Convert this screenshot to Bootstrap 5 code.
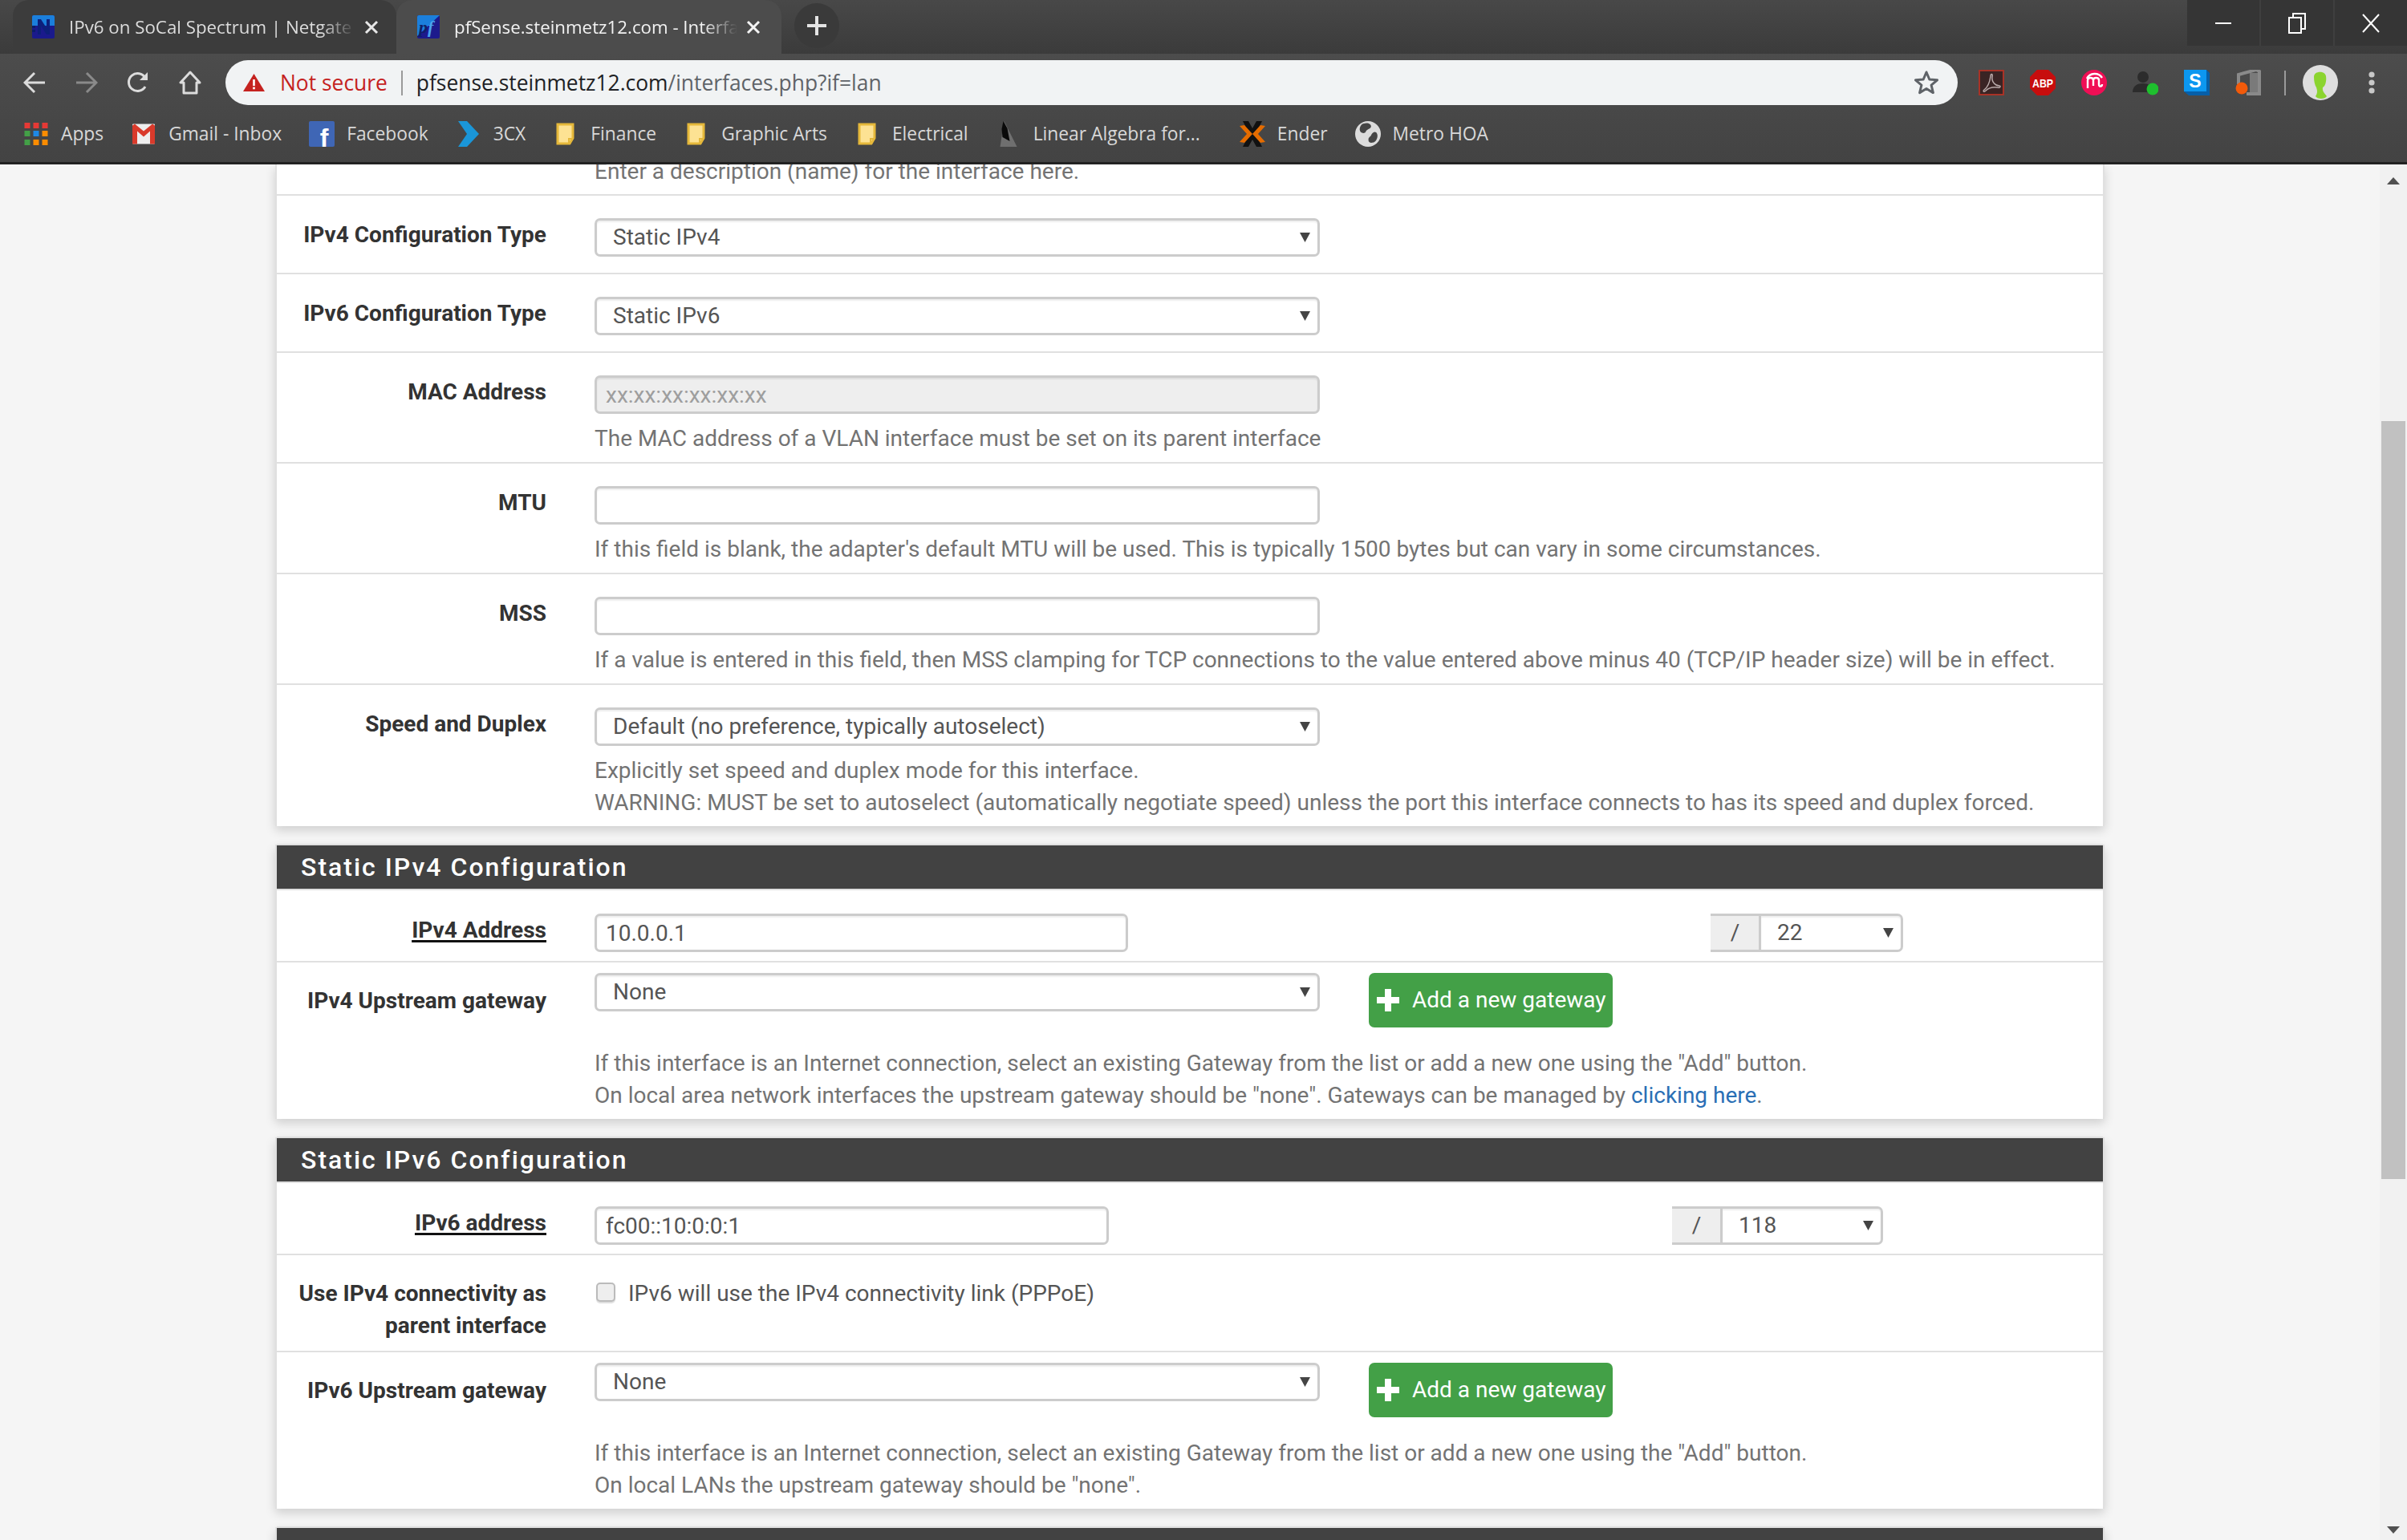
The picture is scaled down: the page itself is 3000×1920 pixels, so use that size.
<!DOCTYPE html>
<html lang="en"><head><meta charset="utf-8"><title>pfSense.steinmetz12.com - Interfaces</title>
<link href="https://cdn.jsdelivr.net/npm/bootstrap@5.3.0/dist/css/bootstrap.min.css" rel="stylesheet">
<style>
html,body{margin:0;height:1920px;width:3000px;overflow:hidden;background:#f5f5f5}
body{font-family:Roboto,"Liberation Sans",sans-serif;font-size:28px;line-height:40px;color:#212121}
.chrome-ui{font-family:"Open Sans","Noto Sans",sans-serif}
.strip{height:67px;background:linear-gradient(#484848,#3b3b3b);padding-left:16px}
.browser-tab{width:478px;height:67px;border-radius:20px 20px 0 0;padding-left:24px;color:#dcdcdc;font-size:22.3px;background:#3c3c3c}
.browser-tab.on{background:#4c4c4c;color:#f2f2f2;padding-left:26px;width:480px;margin-left:0}
.tab-title{margin-left:18px;width:357px;white-space:nowrap;overflow:hidden;-webkit-mask-image:linear-gradient(90deg,#000 88%,transparent);mask-image:linear-gradient(90deg,#000 88%,transparent);line-height:67px;padding-bottom:1px}
.tab-x{margin-left:11px;width:18px;height:18px}
.on .tab-title{width:353px}
.new-tab{width:56px;height:56px;border-radius:50%;background:#3a3a3a;margin-left:16px;margin-top:4px}
.win-btns{margin-left:auto;height:57px;background:#353535;width:274px}
.win-btn{flex:1;border-left:2px solid #3f3f3f}
.win-btn:first-child{border-left:0}
.tools{height:64px;background:linear-gradient(#4c4c4c,#484848);padding:8px 0 0 11px}
.navb{width:64.5px;height:56px}
.omni{width:2159px;margin-left:12px;height:56px;background:#f1f3f4;border-radius:28px;padding-left:22px;font-size:26.4px;color:#5f6368}
.notsec{color:#c5221f;margin-left:19px}
.omni-sep{width:2px;height:31px;background:#9a9a9a;margin:0 17px}
.dom{color:#202124}
.exts{margin-left:26px;gap:32px}
.ext{width:32px;height:32px;display:block}
.ext-sep{margin:0 0 0 -3px}
.ext-av{margin-left:-11px}
.ext-dots{margin-left:5px}
.marks{height:74px;background:linear-gradient(#484848,#434343);border-bottom:3px solid #222;padding:0 0 0 29px;font-size:22.8px;color:#d8d8d8;gap:34px}
.mark-item{gap:15px;white-space:nowrap}
.mark-ico{width:32px;height:32px;flex:none}
.mark-last{margin-right:15px}
.page-wrap{height:1715px}
.sheet{width:2966px;height:1715px;overflow:hidden}
.bar{width:34px;height:1715px;background:#f1f1f1}
.thumb{width:30px;height:945px;background:#c1c1c1;margin:320px 0 0 2px}
.sect{margin:0 343px 23px;border:0;border-left:2px solid #e0e0e0;border-right:2px solid #e0e0e0;border-radius:0;box-shadow:0 5px 12px rgba(0,0,0,.16);background:#fff}
.sect-head{background:#424242;color:#fff;font-size:32px;font-weight:500;letter-spacing:2px;line-height:54px;padding:0 0 0 30px;border-radius:0!important;border:0;border-top:2px solid #e0e0e0;border-bottom:2px solid #e0e0e0;margin:-1px 0 0;box-sizing:content-box;height:54px}
.fld{display:flex;gap:60px;border-top:2px solid #e0e0e0;padding:28px 0 20px}
.fld:first-child,.sect-head+.fld{border-top:0}
.fld-lab{width:336px;text-align:right;font-weight:700;color:#333;flex:none;padding-top:1px}
.fld-main{flex:1;min-width:0}
.ctl-wide{width:904px}
.form-control.pf,.form-select.pf{height:48px;border:3px solid #ccc;border-radius:7px;font-size:28px;color:#555;line-height:40px;box-shadow:inset 0 2px 2px rgba(0,0,0,.07);padding:0 11px;background-color:#fff}
.form-select.pf{padding-left:20px;background-size:13px 12px;background-position:right 9px center;background-image:url("data:image/svg+xml,%3Csvg xmlns='http://www.w3.org/2000/svg' viewBox='0 0 13 12'%3E%3Cpath d='M0 0h13L6.500 12z' fill='%23444'/%3E%3C/svg%3E")}
.form-control.pf:disabled{background:#eee}
.form-control.pf::placeholder{color:#9e9e9e}
.hint{color:#737373;margin-top:11px;white-space:nowrap;margin-bottom:-11px}
.hint.gw{margin-top:25px}
.hint a{color:#2a6fb5;text-decoration:none}
.lab-abbr{color:#333;text-decoration:underline;text-decoration-thickness:3px;text-underline-offset:3px;text-decoration-color:#111}
.fld.tight{padding:29px 0 11px}
.fld.gate{padding:13px 0 20px}
.fld.gate .fld-lab{padding-top:15px}
.fld.tick{padding:27px 0 11px}
.fld-top{border-top:0;padding:0 0 8px;height:37px;align-items:flex-end}
.w-v4{width:665px}
.w-v6{width:641px}
.grp-v4{width:240px;margin-left:726px}
.grp-v6{width:263px;margin-left:702px}
.input-group .input-group-text.pf-add{background:#eee;border:3px solid #ccc;border-left:0;border-right:0;height:48px;border-radius:0;width:61px;justify-content:center;font-size:28px;color:#555;padding:0}
.input-group .form-select.pf{border-top-left-radius:0;border-bottom-left-radius:0;margin-left:0;flex:1;width:auto}
.btn.add-gw{background:#43a047;border:0;color:#fff;width:304px;height:68px;border-radius:7px;font-size:28px;padding:0 0 0 10px;gap:16px;justify-content:flex-start;margin-left:61px;white-space:nowrap}
.pick{width:24px;height:24px;background:#eee;border:2px solid #bbb;border-radius:5px;margin:7px 16px 0 2px;flex:none;box-shadow:0 2px 1px #ddd}
.tick-text{color:#555;padding-top:1px}
</style></head>
<body>
<div class="chrome-ui">
 <div class="strip d-flex position-relative">
  <div class="browser-tab d-flex align-items-center">
   <svg width="28" height="29" viewBox="0 0 28 29"><rect width="28" height="29" rx="2" fill="#1a1a8c"/><path d="M2 0h24a2 2 0 0 1 2 2v11H0V2a2 2 0 0 1 2-2z" fill="#1b7fdc"/><path d="M0 13h4v3H0zM0 18h4v3H0z" fill="#0b1d6b"/><path d="M7 24V5h4l7 11V5h4v19h-4L11 13v11z" fill="#0d1f7a"/></svg>
   <span class="tab-title">IPv6 on SoCal Spectrum | Netgate</span>
   <svg class="tab-x" viewBox="0 0 18 18"><path d="M2 2l14 14M16 2L2 16" stroke="#e8e8e8" stroke-width="3"/></svg>
  </div>
  <div class="browser-tab on d-flex align-items-center">
   <svg width="28" height="29" viewBox="0 0 28 29"><rect width="28" height="29" rx="2" fill="#1d1a8c"/><path d="M2 0h26L0 26V2a2 2 0 0 1 2-2z" fill="#1b7fdc"/><text x="2" y="22" font-family="Liberation Serif,serif" font-style="italic" font-weight="700" font-size="22" fill="#0f1f66">p<tspan fill="#4aa3ee">f</tspan></text></svg>
   <span class="tab-title">pfSense.steinmetz12.com - Interfa</span>
   <svg class="tab-x" viewBox="0 0 18 18"><path d="M2 2l14 14M16 2L2 16" stroke="#f4f4f4" stroke-width="3"/></svg>
  </div>
  <div class="new-tab d-flex align-items-center justify-content-center">
   <svg width="24" height="24" viewBox="0 0 24 24"><path d="M12 0v24M0 12h24" stroke="#e4e4e4" stroke-width="4"/></svg>
  </div>
  <div class="win-btns d-flex">
   <div class="win-btn d-flex align-items-center justify-content-center"><svg width="20" height="20" viewBox="0 0 20 20"><path d="M0 10h20" stroke="#fff" stroke-width="2"/></svg></div>
   <div class="win-btn d-flex align-items-center justify-content-center"><svg width="22" height="26" viewBox="0 0 22 26"><path d="M6 5V1h15v19h-4M1 6h15v19H1z" fill="none" stroke="#fff" stroke-width="2"/></svg></div>
   <div class="win-btn d-flex align-items-center justify-content-center"><svg width="22" height="24" viewBox="0 0 22 24"><path d="M1 1l20 22M21 1L1 23" stroke="#fff" stroke-width="2"/></svg></div>
  </div>
 </div>
 <div class="tools d-flex">
  <div class="navb d-flex align-items-center justify-content-center"><svg width="28" height="30" viewBox="0 0 28 30"><path d="M27 15H3M14 3L2 15l12 12" fill="none" stroke="#dcdcdc" stroke-width="3"/></svg></div>
  <div class="navb d-flex align-items-center justify-content-center"><svg width="28" height="30" viewBox="0 0 28 30"><path d="M1 15h24M14 3l12 12-12 12" fill="none" stroke="#8a8a8a" stroke-width="3"/></svg></div>
  <div class="navb d-flex align-items-center justify-content-center"><svg width="28" height="30" viewBox="0 0 28 30"><path d="M23 20a11 11 0 1 1 0-11" fill="none" stroke="#dcdcdc" stroke-width="3"/><path d="M26 2v10H16z" fill="#dcdcdc"/></svg></div>
  <div class="navb d-flex align-items-center justify-content-center"><svg width="28" height="30" viewBox="0 0 28 30"><path d="M14 2L2 15h4v13h16V15h4z" fill="none" stroke="#dcdcdc" stroke-width="3" stroke-linejoin="round"/></svg></div>
  <div class="omni d-flex align-items-center">
   <svg width="27" height="22" viewBox="0 0 27 22"><path d="M13.500 0L27 22H0z" fill="#c5221f"/><path d="M12.200 7h2.600v8h-2.600zM12.200 16.500h2.600v2.700h-2.600z" fill="#fff"/></svg>
   <span class="notsec">Not secure</span><span class="omni-sep"></span>
   <span class="dom">pfsense.steinmetz12.com</span><span>/interfaces.php?if=lan</span>
   <svg class="ms-auto me-4" width="30" height="30" viewBox="0 0 30 30"><path d="M15 2l3.800 9 9.700.8-7.400 6.300 2.300 9.500L15 22.500l-8.400 5.100 2.300-9.500-7.400-6.300 9.700-.8z" fill="none" stroke="#5f6368" stroke-width="3" stroke-linejoin="round"/></svg>
  </div>
  <div class="exts d-flex align-items-center">
   <svg class="ext" viewBox="0 0 32 32"><rect x="1" y="1" width="30" height="30" fill="#3a2424" stroke="#a93226" stroke-width="2"/><path d="M7 25c4-3 7-10 8-17 0-4 3-3 2 1-1 6 4 11 9 11 2 0 1 3-2 2-6-1-11 0-15 4-2 2-4 1-2-1z" fill="none" stroke="#b9a9a9" stroke-width="1.500"/></svg>
   <svg class="ext" viewBox="0 0 32 32"><path d="M9 0h14l9 9v14l-9 9H9l-9-9V9z" fill="#c70d0d"/><text x="16" y="22" text-anchor="middle" font-family="Liberation Sans,sans-serif" font-weight="700" font-size="15" fill="#fff" textLength="26" lengthAdjust="spacingAndGlyphs">ABP</text></svg>
   <svg class="ext" viewBox="0 0 32 32"><circle cx="16" cy="16" r="16" fill="#f00e55"/><path d="M8 23V13c0-4 7-4 7 0v7M15 13c0-4 7-4 7 0v5c0 4 4 3 4 0" fill="none" stroke="#fff" stroke-width="2.400"/><path d="M7 11a11 11 0 0 1 19-1" fill="none" stroke="#fff" stroke-width="2.400"/></svg>
   <svg class="ext" viewBox="0 0 32 32"><circle cx="13" cy="9" r="7" fill="#2c2c2c"/><path d="M0 28c0-8 6-11 13-11s11 3 11 11z" fill="#2c2c2c"/><circle cx="25" cy="24" r="7.500" fill="#1ec02e"/></svg>
   <svg class="ext" viewBox="0 0 32 32"><path d="M28 0l4 4v28H6l-6-5z" fill="#075fa8"/><rect width="28" height="27" fill="#0c97f0"/><text x="14" y="22" text-anchor="middle" font-family="Liberation Sans,sans-serif" font-weight="700" font-size="23" fill="#fff">S</text></svg>
   <svg class="ext" viewBox="0 0 32 32"><path d="M4 18V6L26 0l4 2v28H14" fill="none" stroke="#8a8a8a" stroke-width="4"/><rect x="18" y="4" width="10" height="24" fill="#7a7a7a"/><circle cx="8" cy="23" r="7.500" fill="#f25a0a"/></svg>
   <span class="omni-sep ext-sep"></span>
   <svg class="ext-av" width="44" height="44" viewBox="0 0 44 44"><circle cx="22" cy="22" r="22" fill="#dedede"/><path d="M14 15c0-8 14-8 15-1 1 6-1 13-4 14-1 5 3 8 5 11-2 4-12 4-14 0 3-4 2-8 1-11-2-3-3-8-3-13z" fill="#8bd42f"/></svg>
   <svg class="ext-dots" width="10" height="30" viewBox="0 0 10 30"><circle cx="5" cy="5" r="3.600" fill="#c8c8c8"/><circle cx="5" cy="15" r="3.600" fill="#c8c8c8"/><circle cx="5" cy="25" r="3.600" fill="#c8c8c8"/></svg>
  </div>
 </div>
 <div class="marks d-flex align-items-center">
  <div class="mark-item d-flex align-items-center"><svg class="mark-ico" viewBox="-1.500 -2 32 32"><path d="M0 0h7v7H0zM11 0h7v7h-7zM22 0h7v7h-7z" fill="#e53935"/><path d="M0 10h7v7H0z" fill="#43a047"/><path d="M11 10h7v7h-7z" fill="#1e88e5"/><path d="M22 10h7v7h-7z" fill="#fb8c00"/><path d="M0 21h7v7H0z" fill="#43a047"/><path d="M11 21h7v7h-7zM22 21h7v7h-7z" fill="#fb8c00"/></svg>Apps</div>
  <div class="mark-item d-flex align-items-center"><svg class="mark-ico" viewBox="-2 -2.500 32 32"><rect y="1" width="28" height="25" rx="1" fill="#eee"/><path d="M0 3v23h6V10l8 7 8-7v16h6V3l-3-2-11 9L3 1z" fill="#d93a2b"/></svg>Gmail - Inbox</div>
  <div class="mark-item d-flex align-items-center"><svg class="mark-ico" viewBox="0 0 32 32"><rect width="32" height="32" rx="2" fill="#3f66b5"/><text x="19" y="32" text-anchor="middle" font-family="Liberation Sans,sans-serif" font-weight="700" font-size="32" fill="#fff">f</text></svg>Facebook</div>
  <div class="mark-item d-flex align-items-center"><svg class="mark-ico" viewBox="-3 0 32 32"><path d="M0 0h11l15 16-15 16H0l11-16z" fill="#1a96d8"/></svg>3CX</div>
  <div class="mark-item d-flex align-items-center"><svg class="mark-ico" viewBox="-4 -2 32 32"><path d="M2 2h19v17l-4 7H2z" fill="#fde293" stroke="#e5b83a" stroke-width="3"/><path d="M16 26v-6h6" fill="none" stroke="#e5b83a" stroke-width="2"/></svg>Finance</div>
  <div class="mark-item d-flex align-items-center"><svg class="mark-ico" viewBox="-4 -2 32 32"><path d="M2 2h19v17l-4 7H2z" fill="#fde293" stroke="#e5b83a" stroke-width="3"/><path d="M16 26v-6h6" fill="none" stroke="#e5b83a" stroke-width="2"/></svg>Graphic Arts</div>
  <div class="mark-item d-flex align-items-center"><svg class="mark-ico" viewBox="-4 -2 32 32"><path d="M2 2h19v17l-4 7H2z" fill="#fde293" stroke="#e5b83a" stroke-width="3"/><path d="M16 26v-6h6" fill="none" stroke="#e5b83a" stroke-width="2"/></svg>Electrical</div>
  <div class="mark-item mark-last d-flex align-items-center"><svg class="mark-ico" viewBox="-2.500 0 32 32"><path d="M8 0l4 8 12 24H3z" fill="#8c8c8c" opacity=".6"/><path d="M7 0l5 9 3 16-9-5-1-10z" fill="#0a0a0a"/></svg>Linear Algebra for...</div>
  <div class="mark-item d-flex align-items-center"><svg class="mark-ico" viewBox="0 0 32 32"><path d="M4 0h7l5 9 5-9h7l-8 16 8 16h-7l-5-9-5 9H4l8-16z" fill="#111"/><path d="M0 6l6-1 10 11L6 27l-6-1 9-10zM32 6l-6-1-10 11 10 11 6-1-9-10z" fill="#e56c00"/></svg>Ender</div>
  <div class="mark-item d-flex align-items-center"><svg class="mark-ico" viewBox="0 0 29 29"><circle cx="14.500" cy="14.500" r="14.500" fill="#dcdcdc"/><path d="M9 3c5-2 9 0 9 3 0 3-5 3-6 6-1 2-4 2-6 0-2-3 0-8 3-9zM24 13c3 4 0 10-3 11-4 1-6 0-6-3s2-3 3-5 3-5 6-3z" fill="#454545"/></svg>Metro HOA</div>
 </div>
</div>
<div class="page-wrap d-flex">
 <div class="sheet">
  <div class="card sect">
   <div class="fld fld-top"><div class="fld-lab"></div><div class="fld-main hint m-0">Enter a description (name) for the interface here.</div></div>
   <div class="fld"><div class="fld-lab">IPv4 Configuration Type</div><div class="fld-main"><select class="form-select pf ctl-wide"><option>Static IPv4</option></select></div></div>
   <div class="fld"><div class="fld-lab">IPv6 Configuration Type</div><div class="fld-main"><select class="form-select pf ctl-wide"><option>Static IPv6</option></select></div></div>
   <div class="fld"><div class="fld-lab">MAC Address</div><div class="fld-main"><input class="form-control pf ctl-wide" disabled placeholder="xx:xx:xx:xx:xx:xx"><div class="hint">The MAC address of a VLAN interface must be set on its parent interface</div></div></div>
   <div class="fld"><div class="fld-lab">MTU</div><div class="fld-main"><input class="form-control pf ctl-wide"><div class="hint">If this field is blank, the adapter's default MTU will be used. This is typically 1500 bytes but can vary in some circumstances.</div></div></div>
   <div class="fld"><div class="fld-lab">MSS</div><div class="fld-main"><input class="form-control pf ctl-wide"><div class="hint">If a value is entered in this field, then MSS clamping for TCP connections to the value entered above minus 40 (TCP/IP header size) will be in effect.</div></div></div>
   <div class="fld"><div class="fld-lab">Speed and Duplex</div><div class="fld-main"><select class="form-select pf ctl-wide"><option>Default (no preference, typically autoselect)</option></select><div class="hint">Explicitly set speed and duplex mode for this interface.<br>WARNING: MUST be set to autoselect (automatically negotiate speed) unless the port this interface connects to has its speed and duplex forced.</div></div></div>
  </div>
  <div class="card sect">
   <div class="card-header sect-head">Static IPv4 Configuration</div>
   <div class="fld tight"><div class="fld-lab"><span class="lab-abbr">IPv4 Address</span></div><div class="fld-main d-flex"><input class="form-control pf w-v4" value="10.0.0.1"><div class="input-group flex-nowrap grp-v4"><span class="input-group-text pf-add">/</span><select class="form-select pf"><option>22</option></select></div></div></div>
   <div class="fld gate"><div class="fld-lab">IPv4 Upstream gateway</div><div class="fld-main"><div class="d-flex align-items-start"><select class="form-select pf ctl-wide"><option>None</option></select><button class="btn add-gw d-flex align-items-center" type="button"><svg width="28" height="28" viewBox="0 0 28 28"><path d="M14 0v28M0 14h28" stroke="#fff" stroke-width="8"/></svg>Add a new gateway</button></div><div class="hint gw">If this interface is an Internet connection, select an existing Gateway from the list or add a new one using the "Add" button.<br>On local area network interfaces the upstream gateway should be "none". Gateways can be managed by <a href="#">clicking here</a>.</div></div></div>
  </div>
  <div class="card sect">
   <div class="card-header sect-head">Static IPv6 Configuration</div>
   <div class="fld tight"><div class="fld-lab"><span class="lab-abbr">IPv6 address</span></div><div class="fld-main d-flex"><input class="form-control pf w-v6" value="fc00::10:0:0:1"><div class="input-group flex-nowrap grp-v6"><span class="input-group-text pf-add">/</span><select class="form-select pf"><option>118</option></select></div></div></div>
   <div class="fld tick"><div class="fld-lab">Use IPv4 connectivity as parent interface</div><div class="fld-main d-flex"><span class="pick"></span><span class="tick-text">IPv6 will use the IPv4 connectivity link (PPPoE)</span></div></div>
   <div class="fld gate"><div class="fld-lab">IPv6 Upstream gateway</div><div class="fld-main"><div class="d-flex align-items-start"><select class="form-select pf ctl-wide"><option>None</option></select><button class="btn add-gw d-flex align-items-center" type="button"><svg width="28" height="28" viewBox="0 0 28 28"><path d="M14 0v28M0 14h28" stroke="#fff" stroke-width="8"/></svg>Add a new gateway</button></div><div class="hint gw">If this interface is an Internet connection, select an existing Gateway from the list or add a new one using the "Add" button.<br>On local LANs the upstream gateway should be "none".</div></div></div>
  </div>
  <div class="card sect">
   <div class="card-header sect-head">Reserved Networks</div>
  </div>
 </div>
 <div class="bar position-relative">
  <svg class="d-block mx-auto position-absolute start-0 end-0 top-0 mt-3" width="16" height="9" viewBox="0 0 16 9"><path d="M8 0l8 9H0z" fill="#505050"/></svg>
  <div class="thumb"></div>
  <svg class="d-block mx-auto position-absolute start-0 end-0 bottom-0 mb-2" width="16" height="9" viewBox="0 0 16 9"><path d="M8 9l8-9H0z" fill="#505050"/></svg>
 </div>
</div>
<script src="https://cdn.jsdelivr.net/npm/bootstrap@5.3.0/dist/js/bootstrap.bundle.min.js"></script>
</body></html>
